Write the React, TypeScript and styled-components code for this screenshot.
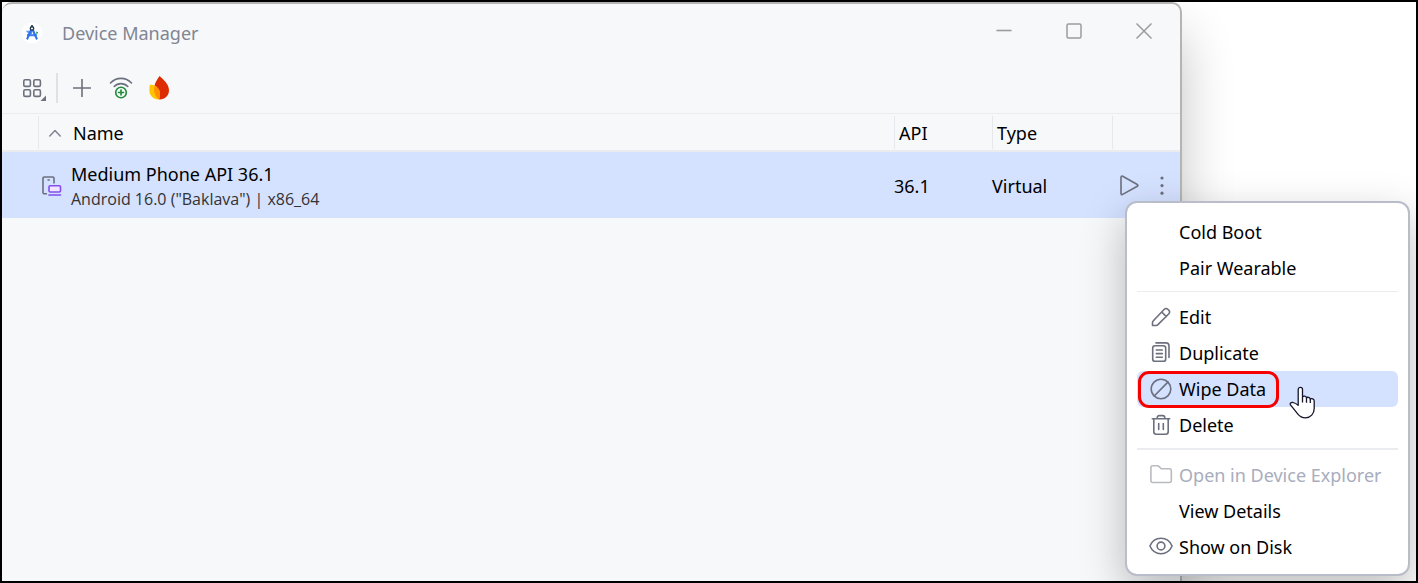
import React from "react";
import styled, { createGlobalStyle } from "styled-components";

const GlobalStyle = createGlobalStyle`
  *, *::before, *::after { box-sizing: border-box; }
  body {
    margin: 0;
    background: #fff;
    font-family: "Noto Sans", "Open Sans", sans-serif;
    font-size: 18px;
    line-height: 24px;
    color: #000;
  }
  button { font: inherit; color: inherit; background: none; border: 0; padding: 0; margin: 0; }
  svg { display: block; flex: none; }
`;

const Desktop = styled.main`
  position: relative;
  display: flex;
  min-height: 100vh;
  padding-right: 234px;
  border: 2px solid #000;
  overflow: hidden;
`;

const Window = styled.section`
  flex: 1;
  min-width: 0;
  background: #f7f8fa;
  border: solid #b4b4b4;
  border-width: 2px 2px 0 0;
  border-radius: 10px 10px 0 0;
  box-shadow: 0 32px 52px rgba(0, 0, 0, 0.24);
`;

const TitleBar = styled.header`
  display: flex;
  align-items: center;
  height: 58px;
  padding: 0 22px 0 18px;
`;

const Title = styled.h1`
  flex: 1;
  margin: 0 0 0 18px;
  font-size: 18px;
  font-weight: 400;
  color: #818594;
`;

const WindowControls = styled.div`
  display: flex;
  gap: 42px;
  margin-bottom: 4px;
`;

const ControlButton = styled.button`
  display: grid;
  place-items: center;
  width: 28px;
  height: 28px;
  color: #9b9c9e;
`;

const Toolbar = styled.div`
  display: flex;
  align-items: center;
  height: 52px;
  padding: 0 17px;
  border-bottom: 1px solid #ebecf0;
`;

const ToolButton = styled.button`
  display: grid;
  place-items: center;
  width: 28px;
  height: 28px;
  margin-right: 11px;
`;

const ToolDivider = styled.span`
  width: 2px;
  height: 30px;
  margin: 0 10px 0 -2px;
  background: #dfe1e5;
`;

const DeviceTable = styled.table`
  width: 100%;
  border-spacing: 0;
  table-layout: fixed;
`;

const Column = styled.col<{ $width?: number }>`
  width: ${(p) => (p.$width ? `${p.$width}px` : "auto")};
`;

const HeadCell = styled.th`
  height: 38px;
  padding: 2px 0 1px;
  border-bottom: 2px solid #ebecf0;
  font-weight: 400;
  text-align: left;
`;

const HeadLabel = styled.div<{ $wide?: boolean }>`
  display: flex;
  align-items: center;
  gap: 12px;
  height: 33px;
  padding-left: ${(p) => (p.$wide ? 10 : 4)}px;
  border-left: 1px solid #e6e8ed;
`;

const DeviceRow = styled.tr`
  height: 66px;
  background: #d4e1ff;
`;

const Cell = styled.td`
  padding: 2px 0 0;
`;

const Device = styled.div`
  display: flex;
  align-items: center;
  gap: 9px;
  padding-left: 4px;
`;

const DeviceName = styled.div`
  line-height: 26px;
`;

const DeviceDetail = styled.div`
  font-family: "Open Sans", "Noto Sans", sans-serif;
  font-size: 16px;
  line-height: 24px;
  color: #333;
`;

const RowActions = styled.div`
  display: flex;
  align-items: center;
  gap: 8px;
  padding-left: 6px;
`;

const RowButton = styled.button`
  display: grid;
  place-items: center;
  width: 24px;
  height: 28px;
  color: #6c707e;
`;

const Menu = styled.div`
  position: absolute;
  top: 199px;
  right: 6px;
  width: 285px;
  padding: 11px 10px 9px;
  background: #fff;
  border: 2px solid #b9bdc9;
  border-radius: 12px;
  box-shadow: 0 16px 44px rgba(0, 0, 0, 0.26);
`;

const MenuItem = styled.button<{ $active?: boolean }>`
  position: relative;
  display: flex;
  align-items: center;
  gap: 6px;
  width: 100%;
  height: 36px;
  padding-left: 12px;
  border-radius: 6px;
  white-space: nowrap;
  text-align: left;
  background: ${(p) => (p.$active ? "#d4e1ff" : "transparent")};
  &:disabled { color: #a8adbd; }
`;

const IconSlot = styled.span`
  display: grid;
  place-items: center;
  width: 24px;
  height: 24px;
  color: #6c707e;
  ${MenuItem}:disabled & { color: #b9bbc0; }
`;

const MenuDivider = styled.hr<{ $thin?: boolean }>`
  height: ${(p) => (p.$thin ? 1 : 2)}px;
  margin: 5px 0 7px;
  border: 0;
  background: #ebecf0;
`;

const Callout = styled.span`
  position: absolute;
  top: 0;
  left: 1px;
  width: 141px;
  height: 37px;
  border: 3px solid #f70000;
  border-radius: 11px;
`;

const Pointer = styled.svg`
  position: absolute;
  top: 15px;
  left: 152px;
  z-index: 1;
`;

const StudioLogo = () => (
  <svg width="24" height="24" viewBox="0 0 24 24" aria-hidden="true">
    <circle cx="12" cy="12" r="10.5" fill="#fff" />
    <path d="M16 10.500l2.300.8-1.800 2.700z" fill="#2fa35a" />
    <path d="M5.800 9.800H12v3.400H8.800z" fill="#5b9bf8" />
    <path d="M7 13.200h9.800v2H7z" fill="#3b7ff0" />
    <path d="M10.400 8h3.200l4.300 9.800-1.700 1.300-4.200-9-4.200 9-1.700-1.300z" fill="#2f74ee" />
    <circle cx="12" cy="7.400" r="1.700" fill="#fff" stroke="#273650" strokeWidth="1.400" />
    <path d="M12 4v2" stroke="#273650" strokeWidth="1.600" />
  </svg>
);

const GridIcon = () => (
  <svg width="28" height="28" viewBox="0 0 28 28" fill="none" stroke="#6c707e" strokeWidth="1.6" aria-hidden="true">
    <rect x="4.8" y="5.8" width="6.6" height="6.6" rx="1.4" />
    <rect x="14.8" y="5.8" width="6.6" height="6.6" rx="1.4" />
    <rect x="4.8" y="15.8" width="6.6" height="6.6" rx="1.4" />
    <rect x="14.8" y="15.8" width="6.6" height="6.6" rx="1.4" />
    <path d="M27 21.500v5.500h-5.500z" fill="#6c707e" stroke="none" />
  </svg>
);

const PlusIcon = () => (
  <svg width="20" height="20" viewBox="0 0 20 20" stroke="#6c707e" strokeWidth="1.6" aria-hidden="true">
    <path d="M10 1v18M1 10h18" />
  </svg>
);

const WifiAddIcon = () => (
  <svg width="26" height="26" viewBox="0 0 26 26" fill="none" strokeLinecap="round" aria-hidden="true">
    <path d="M2.500 8c5.800-6.200 15.200-6.200 21 0M6.200 11.500c3.800-3.900 9.800-3.900 13.600 0" stroke="#6c707e" strokeWidth="1.6" />
    <circle cx="13" cy="17.500" r="5.300" fill="#f2fcf3" stroke="#208a3c" strokeWidth="1.600" />
    <path d="M13 15v5M10.500 17.500h5" stroke="#208a3c" strokeWidth="1.600" />
  </svg>
);

const FirebaseIcon = () => (
  <svg width="26" height="26" viewBox="1 0 26 26" aria-hidden="true">
    <path d="M13.700 1c3.500 3.600 9.300 8 9.300 14.200 0 5.200-4 9.300-9.300 9.300-3.200-1.600-5.700-5-5.700-9.700C8 9 11 4.500 13.700 1z" fill="#dd2c00" />
    <path d="M3.800 10c4.200-1 9.600 2.600 10.100 7.800.2 2.600-.1 4.800-.9 6.700C7.500 24.700 3.400 20.800 3.400 15.600c0-2.200.1-3.900.4-5.600z" fill="#ffc400" />
    <path d="M8.500 10.900c3.100 1.300 5.100 4 5.400 6.900.2 2.600-.1 4.800-.9 6.700-2.800-2-5-5.600-5-9.700 0-1.400.2-2.700.5-3.900z" fill="#ff9100" />
  </svg>
);

const SortIcon = () => (
  <svg width="12" height="12" viewBox="0 0 12 12" fill="none" stroke="#818594" strokeWidth="1.500" strokeLinecap="round" strokeLinejoin="round" aria-hidden="true">
    <path d="M.8 9L6 3.600 11.200 9" />
  </svg>
);

const PhoneIcon = () => (
  <svg width="20" height="20" viewBox="0 0 20 20" fill="none" aria-hidden="true">
    <path d="M5 17.800H2.300A1.300 1.300 0 0 1 1 16.500V2.300A1.300 1.300 0 0 1 2.300 1h8.400A1.300 1.300 0 0 1 12 2.300V7.500M5.500 4h2.300" stroke="#6c707e" strokeWidth="1.600" />
    <rect x="7" y="9.800" width="11.500" height="6.200" rx="1.200" fill="#efe5ff" stroke="#834df0" strokeWidth="1.600" />
    <path d="M7 19h11.500" stroke="#834df0" strokeWidth="1.600" strokeLinecap="round" />
  </svg>
);

const PlayIcon = () => (
  <svg width="22" height="24" viewBox="0 0 22 24" fill="none" stroke="currentColor" strokeWidth="1.600" strokeLinejoin="round" aria-hidden="true">
    <path d="M2 3.200v16.200c0 1 .9 1.500 1.700 1L18.300 12.300c.8-.4.800-1.400 0-1.800L3.700 2.200C2.900 1.800 2 2.300 2 3.200z" />
  </svg>
);

const MoreIcon = () => (
  <svg width="6" height="20" viewBox="0 0 6 20" fill="currentColor" aria-hidden="true">
    <circle cx="3" cy="2" r="1.600" />
    <circle cx="3" cy="9.600" r="1.600" />
    <circle cx="3" cy="17.200" r="1.600" />
  </svg>
);

const iconPaths: Record<string, React.ReactNode> = {
  edit: (
    <path d="M3.500 20.500v-3.100c0-.5.200-1 .6-1.400L15.300 4.200a2.400 2.400 0 0 1 3.400 0l1.200 1.200a2.400 2.400 0 0 1 0 3.400L8.700 19.900c-.4.400-.9.600-1.400.6zM12.700 7l4.600 4.600" />
  ),
  duplicate: (
    <>
      <rect x="3.700" y="4.700" width="13" height="15.600" rx="2.400" />
      <path d="M7 1.900h10a3 3 0 0 1 3 3V16.500M7.300 9h6M7.300 12.600h6M7.300 16.200h6" />
    </>
  ),
  wipe: (
    <>
      <circle cx="12" cy="12" r="9.800" />
      <path d="M5.200 19L18.900 5.100" />
    </>
  ),
  remove: (
    <path d="M3.300 5.700h17.400M8.300 5.500V4.300c0-1 .8-1.700 1.800-1.700h3.800c1 0 1.800.7 1.800 1.700v1.200M4.800 6v12.800c0 1.600 1 2.500 2.500 2.500h9.400c1.500 0 2.500-.9 2.500-2.500V6M9.700 10.500v6M14.300 10.500v6" />
  ),
  folder: (
    <path d="M1.900 4.800c0-1.100.9-2 2-2h4.500c.6 0 1.100.2 1.500.6l2.300 2.300h8.100c1.100 0 2 .9 2 2v9.800c0 1.100-.9 2-2 2H3.900c-1.100 0-2-.9-2-2z" />
  ),
  eye: (
    <>
      <path d="M.9 11C3 6.200 7.200 3.300 12 3.300S21 6.200 23.100 11C21 15.800 16.800 18.700 12 18.700S3 15.800.9 11z" />
      <circle cx="12" cy="11" r="3.900" />
    </>
  ),
};

const MenuIcon = ({ name }: { name: string }) => (
  <svg width="24" height="24" viewBox="0 0 24 24" fill="none" stroke="currentColor" strokeWidth="1.600" strokeLinecap="round" strokeLinejoin="round" aria-hidden="true">
    {iconPaths[name]}
  </svg>
);

const HandPointer = () => (
  <Pointer width="28" height="34" viewBox="0 0 28 34" fill="#fff" stroke="#15152a" strokeWidth="1.300" strokeLinejoin="round" aria-hidden="true">
    <path d="M9.200 19V3.500c0-2.800 4.300-2.800 4.300 0V11c.8-1.400 3.700-1 4 .8 1-1 3.400-.5 3.700 1.200 1.400-.9 4-.1 4 2v7.500c0 5.300-3.600 9.300-8.700 9.300-3.400 0-5.800-1.400-7.800-4L1.500 18.900C.6 17.500 2 16 4 16.500c2 .6 3.700 1.500 5.200 2.800z" />
    <path d="M13.500 11v5.500M17.500 11.800v5M21.300 13v4" fill="none" />
  </Pointer>
);

type Entry = { label: string; icon?: string; disabled?: boolean; active?: boolean };

const menuGroups: Entry[][] = [
  [{ label: "Cold Boot" }, { label: "Pair Wearable" }],
  [
    { label: "Edit", icon: "edit" },
    { label: "Duplicate", icon: "duplicate" },
    { label: "Wipe Data", icon: "wipe", active: true },
    { label: "Delete", icon: "remove" },
  ],
  [
    { label: "Open in Device Explorer", icon: "folder", disabled: true },
    { label: "View Details" },
    { label: "Show on Disk", icon: "eye" },
  ],
];

export default function App() {
  return (
    <>
      <GlobalStyle />
      <Desktop>
        <Window>
          <TitleBar>
            <StudioLogo />
            <Title>Device Manager</Title>
            <WindowControls>
              <ControlButton aria-label="Minimize">
                <svg width="16" height="16" viewBox="0 0 16 16" stroke="currentColor" strokeWidth="1.600">
                  <path d="M.5 7.500h15" />
                </svg>
              </ControlButton>
              <ControlButton aria-label="Maximize">
                <svg width="16" height="16" viewBox="0 0 16 16" fill="none" stroke="currentColor" strokeWidth="1.500">
                  <rect x="1" y="1" width="14" height="14" rx="1.500" />
                </svg>
              </ControlButton>
              <ControlButton aria-label="Close">
                <svg width="16" height="16" viewBox="0 0 16 16" stroke="currentColor" strokeWidth="1.500">
                  <path d="M.5.5l15 15M15.500.5l-15 15" />
                </svg>
              </ControlButton>
            </WindowControls>
          </TitleBar>
          <Toolbar>
            <ToolButton aria-label="Group devices"><GridIcon /></ToolButton>
            <ToolDivider />
            <ToolButton aria-label="Create device"><PlusIcon /></ToolButton>
            <ToolButton aria-label="Pair over Wi-Fi"><WifiAddIcon /></ToolButton>
            <ToolButton aria-label="Firebase"><FirebaseIcon /></ToolButton>
          </Toolbar>
          <DeviceTable>
            <colgroup>
              <Column $width={36} />
              <Column />
              <Column $width={98} />
              <Column $width={120} />
              <Column $width={68} />
            </colgroup>
            <thead>
              <tr>
                <HeadCell />
                <HeadCell><HeadLabel $wide><SortIcon />Name</HeadLabel></HeadCell>
                <HeadCell><HeadLabel>API</HeadLabel></HeadCell>
                <HeadCell><HeadLabel>Type</HeadLabel></HeadCell>
                <HeadCell><HeadLabel /></HeadCell>
              </tr>
            </thead>
            <tbody>
              <DeviceRow>
                <Cell />
                <Cell>
                  <Device>
                    <PhoneIcon />
                    <div>
                      <DeviceName>Medium Phone API 36.1</DeviceName>
                      <DeviceDetail>Android 16.0 ("Baklava") | x86_64</DeviceDetail>
                    </div>
                  </Device>
                </Cell>
                <Cell>36.1</Cell>
                <Cell>Virtual</Cell>
                <Cell>
                  <RowActions>
                    <RowButton aria-label="Start"><PlayIcon /></RowButton>
                    <RowButton aria-label="More actions"><MoreIcon /></RowButton>
                  </RowActions>
                </Cell>
              </DeviceRow>
            </tbody>
          </DeviceTable>
        </Window>
        <Menu role="menu">
          {menuGroups.map((group, index) => (
            <React.Fragment key={index}>
              {index > 0 && <MenuDivider $thin={index === 1} />}
              {group.map((entry) => (
                <MenuItem key={entry.label} role="menuitem" disabled={entry.disabled} $active={entry.active}>
                  <IconSlot>{entry.icon && <MenuIcon name={entry.icon} />}</IconSlot>
                  {entry.label}
                  {entry.active && <Callout />}
                  {entry.active && <HandPointer />}
                </MenuItem>
              ))}
            </React.Fragment>
          ))}
        </Menu>
      </Desktop>
    </>
  );
}
